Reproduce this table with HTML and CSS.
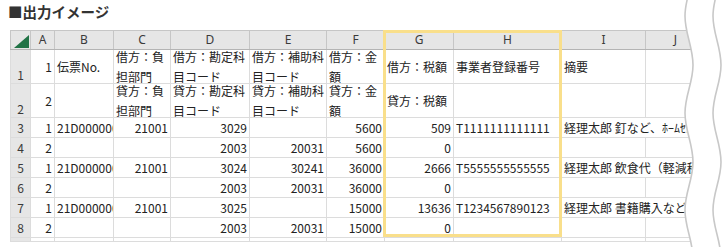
FILE: index.html
```html
<!DOCTYPE html>
<html lang="ja">
<head>
<meta charset="utf-8">
<title>出力イメージ</title>
<link rel="stylesheet" href="styles.css">
</head>
<body>
<div class="page">
  <h1 class="title">■出力イメージ</h1>
  <div class="sheet">
    <table class="grid">
      <colgroup>
        <col class="w-rh"><col class="w-a"><col class="w-b"><col class="w-c"><col class="w-d"><col class="w-e"><col class="w-f"><col class="w-g"><col class="w-h"><col class="w-i"><col class="w-j">
      </colgroup>
      <thead>
        <tr class="hdr">
          <th class="corner"><div class="hc corner-in"><svg class="tri" width="15" height="13" viewBox="0 0 15 13"><polygon points="15,0 15,13 0,13" fill="#217346"/></svg></div></th>
          <th><div class="hc">A</div></th>
          <th><div class="hc">B</div></th>
          <th><div class="hc">C</div></th>
          <th><div class="hc">D</div></th>
          <th><div class="hc">E</div></th>
          <th><div class="hc">F</div></th>
          <th><div class="hc">G</div></th>
          <th><div class="hc">H</div></th>
          <th><div class="hc">I</div></th>
          <th><div class="hc">J</div></th>
        </tr>
      </thead>
      <tbody>
        <tr class="tall">
          <th class="rh"><div class="rc">1</div></th>
          <td><div class="cell num">1</div></td>
          <td><div class="cell">伝票No.</div></td>
          <td><div class="cell"><span class="wrap">借方：負担部門</span></div></td>
          <td><div class="cell"><span class="wrap">借方：勘定科目コード</span></div></td>
          <td><div class="cell"><span class="wrap">借方：補助科目コード</span></div></td>
          <td><div class="cell"><span class="wrap">借方：金額</span></div></td>
          <td><div class="cell">借方：税額</div></td>
          <td><div class="cell">事業者登録番号</div></td>
          <td><div class="cell">摘要</div></td>
          <td><div class="cell"></div></td>
        </tr>
        <tr class="tall">
          <th class="rh"><div class="rc">2</div></th>
          <td><div class="cell num">2</div></td>
          <td><div class="cell"></div></td>
          <td><div class="cell"><span class="wrap">貸方：負担部門</span></div></td>
          <td><div class="cell"><span class="wrap">貸方：勘定科目コード</span></div></td>
          <td><div class="cell"><span class="wrap">貸方：補助科目コード</span></div></td>
          <td><div class="cell"><span class="wrap">貸方：金額</span></div></td>
          <td><div class="cell">貸方：税額</div></td>
          <td><div class="cell"></div></td>
          <td><div class="cell"></div></td>
          <td><div class="cell"></div></td>
        </tr>
        <tr>
          <th class="rh"><div class="rc">3</div></th>
          <td><div class="cell num">1</div></td>
          <td><div class="cell">21D0000001</div></td>
          <td><div class="cell num">21001</div></td>
          <td><div class="cell num">3029</div></td>
          <td><div class="cell num"></div></td>
          <td><div class="cell num">5600</div></td>
          <td><div class="cell num">509</div></td>
          <td><div class="cell">T1111111111111</div></td>
          <td colspan="2"><div class="cell">経理太郎 釘など、ﾎｰﾑｾﾝﾀｰ</div></td>
        </tr>
        <tr>
          <th class="rh"><div class="rc">4</div></th>
          <td><div class="cell num">2</div></td>
          <td><div class="cell"></div></td>
          <td><div class="cell num"></div></td>
          <td><div class="cell num">2003</div></td>
          <td><div class="cell num">20031</div></td>
          <td><div class="cell num">5600</div></td>
          <td><div class="cell num">0</div></td>
          <td><div class="cell"></div></td>
          <td><div class="cell"></div></td>
          <td><div class="cell"></div></td>
        </tr>
        <tr>
          <th class="rh"><div class="rc">5</div></th>
          <td><div class="cell num">1</div></td>
          <td><div class="cell">21D0000002</div></td>
          <td><div class="cell num">21001</div></td>
          <td><div class="cell num">3024</div></td>
          <td><div class="cell num">30241</div></td>
          <td><div class="cell num">36000</div></td>
          <td><div class="cell num">2666</div></td>
          <td><div class="cell">T5555555555555</div></td>
          <td colspan="2"><div class="cell">経理太郎 飲食代（軽減税率）</div></td>
        </tr>
        <tr>
          <th class="rh"><div class="rc">6</div></th>
          <td><div class="cell num">2</div></td>
          <td><div class="cell"></div></td>
          <td><div class="cell num"></div></td>
          <td><div class="cell num">2003</div></td>
          <td><div class="cell num">20031</div></td>
          <td><div class="cell num">36000</div></td>
          <td><div class="cell num">0</div></td>
          <td><div class="cell"></div></td>
          <td><div class="cell"></div></td>
          <td><div class="cell"></div></td>
        </tr>
        <tr>
          <th class="rh"><div class="rc">7</div></th>
          <td><div class="cell num">1</div></td>
          <td><div class="cell">21D0000003</div></td>
          <td><div class="cell num">21001</div></td>
          <td><div class="cell num">3025</div></td>
          <td><div class="cell num"></div></td>
          <td><div class="cell num">15000</div></td>
          <td><div class="cell num">13636</div></td>
          <td><div class="cell">T1234567890123</div></td>
          <td colspan="2"><div class="cell">経理太郎 書籍購入など</div></td>
        </tr>
        <tr>
          <th class="rh"><div class="rc">8</div></th>
          <td><div class="cell num">2</div></td>
          <td><div class="cell"></div></td>
          <td><div class="cell num"></div></td>
          <td><div class="cell num">2003</div></td>
          <td><div class="cell num">20031</div></td>
          <td><div class="cell num">15000</div></td>
          <td><div class="cell num">0</div></td>
          <td><div class="cell"></div></td>
          <td><div class="cell"></div></td>
          <td><div class="cell"></div></td>
        </tr>
        <tr class="stub">
          <th class="rh"><div class="sc"></div></th>
          <td><div class="sc"></div></td><td><div class="sc"></div></td><td><div class="sc"></div></td><td><div class="sc"></div></td><td><div class="sc"></div></td><td><div class="sc"></div></td><td><div class="sc"></div></td><td><div class="sc"></div></td><td><div class="sc"></div></td><td><div class="sc"></div></td>
        </tr>
      </tbody>
    </table>
    <div class="highlight"></div>
  </div>
  <svg class="tear" width="55" height="247" viewBox="0 0 55 247">
    <path class="tear-fill" d="M23 -32 C23 -14.3 15 -1.7 15 16 C15 33.7 23 47 23 65 C23 82.7 15 95.3 15 113 C15 130.7 23 144 23 162 C23 179.7 15 192.3 15 210 C15 227.7 23 241 23 259 L55 259 L55 -32 Z"/>
    <path class="tear-line" d="M23 -32 C23 -14.3 15 -1.7 15 16 C15 33.7 23 47 23 65 C23 82.7 15 95.3 15 113 C15 130.7 23 144 23 162 C23 179.7 15 192.3 15 210 C15 227.7 23 241 23 259"/>
    <path class="tear-line" d="M51 -32 C51 -14.3 43 -1.7 43 16 C43 33.7 51 47 51 65 C51 82.7 43 95.3 43 113 C43 130.7 51 144 51 162 C51 179.7 43 192.3 43 210 C43 227.7 51 241 51 259"/>
  </svg>
</div>
</body>
</html>
```

FILE: styles.css
```css
html, body {
  margin: 0;
  padding: 0;
  background: #ffffff;
}

.page {
  position: relative;
  width: 725px;
  height: 247px;
  overflow: hidden;
  font-family: "Noto Sans CJK JP", "Noto Sans", sans-serif;
  color: #222222;
}

.title {
  margin: 0;
  padding-left: 8px;
  height: 30px;
  line-height: 23px;
  font-size: 14.5px;
  font-weight: 700;
  color: #333333;
}

.sheet {
  position: relative;
  margin-left: 10px;
  width: 695px;
}

.grid {
  border-collapse: collapse;
  table-layout: fixed;
  width: 695px;
  font-size: 12px;
}

.grid th,
.grid td {
  padding: 0;
  border: 1px solid #dcdcdc;
  font-weight: 400;
}

.w-rh { width: 20px; }
.w-a { width: 24px; }
.w-b { width: 59px; }
.w-c { width: 57px; }
.w-d { width: 79px; }
.w-e { width: 77px; }
.w-f { width: 58px; }
.w-g { width: 69px; }
.w-h { width: 108px; }
.w-i { width: 84px; }
.w-j { width: 60px; }

/* column header */
.hdr th {
  background: #e6e6e6;
  border-color: #c6c6c6;
  border-bottom-color: #b4b4b4;
}

.hc {
  height: 18px;
  line-height: 18px;
  text-align: center;
  color: #3a3a3a;
  font-family: "Noto Sans", "Noto Sans CJK JP", sans-serif;
  font-size: 12px;
  overflow: hidden;
}

.corner-in {
  display: flex;
  justify-content: flex-end;
  align-items: flex-end;
  padding: 0 1px 1px 0;
  box-sizing: border-box;
}

.tri {
  display: block;
}

/* row header */
.rh {
  background: #e6e6e6;
  border-color: #c6c6c6;
  border-right-color: #b4b4b4;
}

.rc {
  height: 19px;
  display: flex;
  justify-content: center;
  align-items: center;
  color: #3a3a3a;
  font-size: 12px;
}

.tall .rc {
  height: 33px;
  align-items: flex-end;
  line-height: 17px;
}

/* cells */
.cell {
  height: 19px;
  display: flex;
  align-items: center;
  padding: 0 1px 0 2px;
  overflow: hidden;
  white-space: nowrap;
  line-height: 19px;
}

.tall .cell {
  height: 33px;
}

.num {
  justify-content: flex-end;
  padding: 0 2px 0 1px;
}

.wrap {
  display: block;
  white-space: normal;
  word-break: break-all;
  line-height: 20px;
}

.stub .sc {
  height: 3px;
}

/* highlighted G:H block */
.highlight {
  position: absolute;
  left: 373px;
  top: 0;
  width: 179px;
  height: 207px;
  border: 3px solid #f9df8b;
  box-sizing: border-box;
  pointer-events: none;
}

/* torn right edge */
.tear {
  position: absolute;
  top: 0;
  right: 0;
  display: block;
}

.tear-fill {
  fill: #ffffff;
  stroke: none;
}

.tear-line {
  fill: none;
  stroke: #c8c8c8;
  stroke-width: 1.6;
}
```
